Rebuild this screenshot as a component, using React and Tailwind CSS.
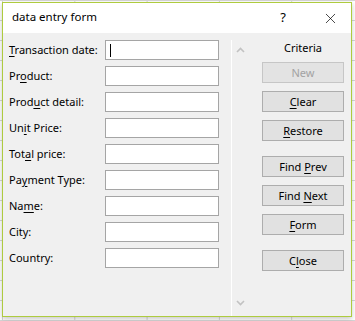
import { X } from 'lucide-react'

const fields = [
  { pre: '', key: 'T', post: 'ransaction date:' },
  { pre: 'Pr', key: 'o', post: 'duct:' },
  { pre: 'Prod', key: 'u', post: 'ct detail:' },
  { pre: 'Un', key: 'i', post: 't Price:' },
  { pre: 'Tot', key: 'a', post: 'l price:' },
  { pre: 'Pa', key: 'y', post: 'ment Type:' },
  { pre: 'Na', key: 'm', post: 'e:' },
  { pre: 'City:', key: '', post: '' },
  { pre: 'Country:', key: '', post: '' },
]

function Mnemonic({ pre, k, post }) {
  return (
    <span className="whitespace-pre">
      {pre}
      {k && <span className="underline underline-offset-2">{k}</span>}
      {post}
    </span>
  )
}

function Button({ pre = '', k = '', post = '', disabled, className = '' }) {
  return (
    <button
      className={`w-[82px] h-[21px] flex items-center justify-center leading-none
                  ${disabled
                    ? 'bg-[#e3e3e3] border border-[#c6c6c6] text-[#a2a2a2]'
                    : 'bg-[#e1e1e1] border border-[#adadad] text-black'} ${className}`}
    >
      <Mnemonic pre={pre} k={k} post={post} />
    </button>
  )
}

function Chevron({ down }) {
  return (
    <svg width="9" height="6" viewBox="0 0 9 6" className="block">
      <path
        d={down ? 'M1 1 L4.5 4.5 L8 1' : 'M1 5 L4.5 1.5 L8 5'}
        fill="none"
        stroke="#c2c2c2"
        strokeWidth="1.6"
      />
    </svg>
  )
}

export default function App() {
  return (
    <div
      className="w-[355px] h-[321px] overflow-hidden bg-white pt-[2px] pl-[2px]
                 bg-[linear-gradient(to_right,#d6d6d6_1px,transparent_1px),linear-gradient(to_bottom,#d6d6d6_1px,transparent_1px)]
                 bg-[size:72.3px_20px] bg-[position:2px_0px]
                 font-['Noto_Sans','Open_Sans',sans-serif] text-[11px] text-black"
    >
      <div className="w-[350px] h-[315px] border border-[#aecb3f] bg-[#f0f0f0] flex flex-col
                      shadow-[0_2px_5px_rgba(0,0,0,0.22)]">
        {/* title bar */}
        <div className="h-[30px] bg-white flex items-center pl-[9px] shrink-0">
          <span className="text-[11.5px] leading-none pb-[2px]">data entry form</span>
          <span className="ml-auto mr-[36px] text-[13px] leading-none pb-[1px]">?</span>
          <X size={17} strokeWidth={1} className="mr-[12px] text-black" />
        </div>

        {/* body */}
        <div className="flex flex-1">
          {/* fields */}
          <div className="w-[228px] pl-[6px] pt-[7px] flex flex-col gap-[6px]">
            {fields.map((f, i) => (
              <div key={i} className="flex items-center h-[20px]">
                <label className="w-[96px] whitespace-nowrap leading-none pb-[2px]">
                  <Mnemonic pre={f.pre} k={f.key} post={f.post} />
                </label>
                <div className="w-[114px] h-[20px] bg-white border border-[#a5a5a5] flex items-center pl-[4px]">
                  {i === 0 && <div className="w-px h-[13px] bg-black" />}
                </div>
              </div>
            ))}
          </div>

          {/* scroll bar */}
          <div className="w-px bg-white mt-[7px]" />
          <div className="w-[16px] flex flex-col items-center justify-between pt-[14px] pb-[10px] pl-[1px]">
            <Chevron />
            <Chevron down />
          </div>

          {/* buttons */}
          <div className="pl-[14px] flex flex-col">
            <div className="w-[82px] text-center mt-[7px] h-[15px] leading-[15px]">Criteria</div>
            <Button pre="New" disabled className="mt-[7px]" />
            <Button k="C" post="lear" className="mt-[8px]" />
            <Button k="R" post="estore" className="mt-[8px]" />
            <Button pre="Find " k="P" post="rev" className="mt-[15px]" />
            <Button pre="Find " k="N" post="ext" className="mt-[8px]" />
            <Button k="F" post="orm" className="mt-[8px]" />
            <Button pre="C" k="l" post="ose" className="mt-[15px]" />
          </div>
        </div>
      </div>
    </div>
  )
}
